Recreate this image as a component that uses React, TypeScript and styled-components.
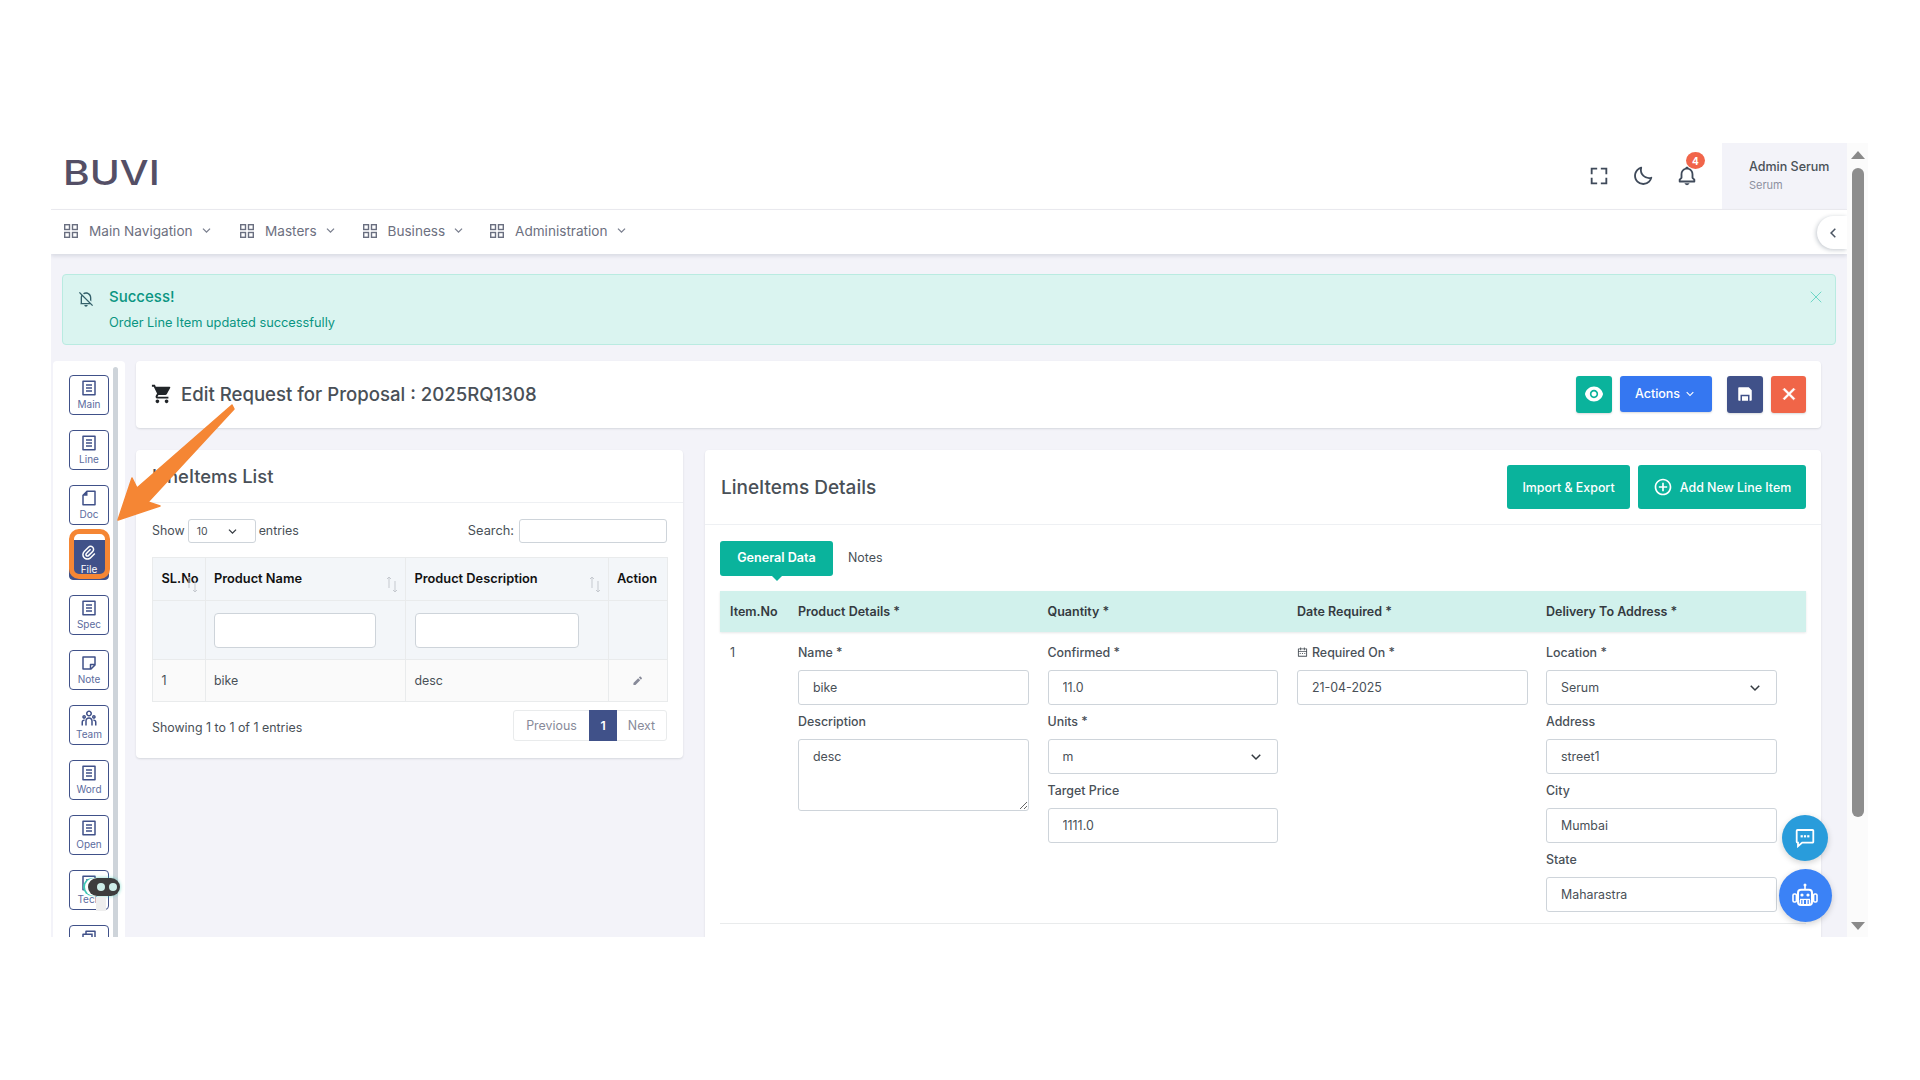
import React from "react";
import styled, { createGlobalStyle } from "styled-components";
import {
  RiArrowDownSLine, RiArrowLeftSLine, RiNotificationOffLine, RiCloseLine, RiEyeFill, RiSaveFill,
  RiFileListLine, RiFile2Line, RiAttachment2, RiStickyNoteLine, RiTeamLine, RiPencilFill,
  RiAddCircleLine, RiCalendar2Line, RiFileCopyLine,
} from "react-icons/ri";
import { MdShoppingCart } from "react-icons/md";
import { BiFullscreen, BiMoon, BiBell } from "react-icons/bi";
import { X } from "lucide-react";

const FONT = `Inter, "Noto Sans", "Liberation Sans", sans-serif`;

const Global = createGlobalStyle`
  html, body { margin: 0; background: #fff; font-family: ${FONT}; }
  body { overflow: hidden; }
  * { box-sizing: border-box; }
`;

const Page = styled.div`
  position: relative;
  width: 1920px;
  height: 1080px;
  padding: 143px 0 0 51px;
  display: flex;
  align-items: flex-start;
`;
const Frame = styled.div`
  position: relative;
  width: 1796px;
  height: 794px;
  overflow: hidden;
  background: #f3f3f9;
  display: flex;
  flex-direction: column;
`;
const ScrollTrack = styled.div`
  width: 21px;
  height: 794px;
  background: #fbfbfb;
  display: flex;
  flex-direction: column;
  align-items: center;
  padding: 8px 0 7px;
`;
const ScrollUp = styled.div`
  width: 0; height: 0;
  border-left: 7px solid transparent; border-right: 7px solid transparent;
  border-bottom: 8px solid #8a8a8a;
`;
const ScrollThumb = styled.div`
  width: 12px;
  height: 649px;
  margin-top: 9px;
  border-radius: 6px;
  background: #8d8d8d;
`;
const ScrollDown = styled.div`
  width: 0; height: 0;
  margin-top: auto;
  border-left: 7px solid transparent; border-right: 7px solid transparent;
  border-top: 8px solid #8a8a8a;
`;

const Header = styled.header`
  height: 67px;
  flex: none;
  background: #fff;
  border-bottom: 1px solid #ececf1;
  display: flex;
  align-items: center;
  padding-left: 12px;
`;
const Logo = styled.div`
  font-size: 34.5px;
  font-weight: 500;
  line-height: 1;
  color: #544f66;
  margin-top: -5px;
  transform: scaleX(1.18);
  transform-origin: left center;
`;
const HeaderIcons = styled.div`
  margin-left: auto;
  display: flex;
  align-items: center;
  gap: 22px;
  margin-right: 24px;
  color: #3f4a5a;
`;
const IconHolder = styled.div`
  position: relative;
  width: 22px;
  height: 22px;
  display: flex;
  align-items: center;
  justify-content: center;
  font-size: 22px;
`;
const Badge = styled.span`
  position: absolute;
  left: 10px;
  top: -13px;
  width: 19px;
  height: 17px;
  border-radius: 50%;
  background: #f1654a;
  color: #fff;
  font-size: 10px;
  font-weight: 700;
  display: flex;
  align-items: center;
  justify-content: center;
`;
const UserPanel = styled.div`
  width: 125px;
  height: 66px;
  background: #f3f3f9;
  padding: 15px 0 0 27px;
`;
const UserName = styled.div`
  font-size: 12.5px;
  font-weight: 500;
  line-height: 18px;
  color: #495057;
  white-space: nowrap;
`;
const UserRole = styled.div`
  font-size: 11px;
  line-height: 18px;
  color: #8d90a0;
`;

const Nav = styled.nav`
  position: relative;
  height: 44px;
  flex: none;
  background: #fff;
  box-shadow: 0 2px 4px rgba(15, 34, 58, 0.12);
  display: flex;
  align-items: center;
  padding: 0 0 3px 12px;
`;
const NavItem = styled.div<{ $w: number }>`
  width: ${(p) => p.$w}px;
  display: flex;
  align-items: center;
  color: #6d7080;
  font-size: 13.6px;
  white-space: nowrap;
  svg:last-child { font-size: 15px; margin-left: 6px; color: #7a7f8e; }
`;
const GridGlyph = styled.svg`
  width: 14px;
  height: 14px;
  margin: 0 11px 0 1px;
  flex: none;
  color: #6a6f80;
`;
const CollapseTab = styled.div`
  position: absolute;
  right: 0;
  top: 6px;
  width: 30px;
  height: 33px;
  border-radius: 17px 0 0 17px;
  background: #fff;
  box-shadow: -1px 1px 4px rgba(15, 34, 58, 0.25);
  display: flex;
  align-items: center;
  padding-left: 7px;
  font-size: 18px;
  color: #4b5563;
`;

const Alert = styled.div`
  flex: none;
  height: 71px;
  margin: 20px 11px 0;
  border: 1px solid #b9ebe1;
  border-radius: 4px;
  background: #daf4f0;
  color: #0a9582;
  display: flex;
  padding: 12px 9px 0 15px;
`;
const AlertIcon = styled.div`
  font-size: 16px;
  margin: 4px 15px 0 0;
  color: #33606a;
  line-height: 1;
`;
const AlertTitle = styled.div`
  font-size: 15px;
  font-weight: 500;
  line-height: 20px;
`;
const AlertText = styled.div`
  margin-top: 6px;
  font-size: 12.8px;
  line-height: 20px;
`;
const AlertClose = styled.div`
  margin-left: auto;
  color: #6fd7c7;
  line-height: 1;
`;

const Main = styled.div`
  flex: 1;
  min-height: 0;
  display: flex;
  gap: 11px;
  margin: 16px 26px 0 2px;
`;
const Sidebar = styled.aside`
  position: relative;
  width: 72px;
  flex: none;
  background: #fff;
  border-radius: 4px 4px 0 0;
  display: flex;
  padding: 14px 0 0 16px;
  overflow: hidden;
`;
const SideList = styled.div`
  width: 40px;
  display: flex;
  flex-direction: column;
  gap: 15px;
`;
const SideButton = styled.div<{ $active?: boolean }>`
  position: relative;
  width: 40px;
  height: 40px;
  flex: none;
  border: 1px solid #405189;
  border-radius: 4px;
  background: ${(p) => (p.$active ? "#405189" : "#fff")};
  color: ${(p) => (p.$active ? "#fff" : "#405189")};
  display: flex;
  flex-direction: column;
  align-items: center;
  padding-top: 3px;
  svg { font-size: 18px; flex: none; }
  span { font-size: 10px; line-height: 13px; margin-top: 1px; color: ${(p) => (p.$active ? "#fff" : "#5c6c9e")}; }
`;
const Highlight = styled.div`
  position: absolute;
  inset: -12px -2px 0 -1px;
  border: 5px solid #f58634;
  border-radius: 10px;
`;
const SideScroll = styled.div`
  position: absolute;
  left: 60px;
  top: 6px;
  bottom: 0;
  width: 5px;
  border-radius: 3px 3px 0 0;
  background: #ced4da;
`;
const PillHost = styled.div`
  position: absolute;
  left: 35px;
  top: 517px;
  width: 32px;
  height: 18px;
  border-radius: 9px;
  background: #3d3d3d;
  box-shadow: -3px 0 0 #fff, -5px 0 0 #3fc7b4, 0 0 3px 1px rgba(63, 199, 180, 0.4);
  display: flex;
  align-items: center;
  justify-content: flex-end;
  gap: 4px;
  padding-right: 3px;
  &::after {
    content: "";
    position: absolute;
    left: 8px;
    top: 19px;
    width: 10px;
    height: 14px;
    background: #eeeeee;
  }
`;
const PillDot = styled.i`
  width: 8px;
  height: 8px;
  border-radius: 50%;
  background: #cdeee8;
`;

const Content = styled.div`
  flex: 1;
  min-width: 0;
  display: flex;
  flex-direction: column;
  gap: 22px;
`;
const Card = styled.section`
  background: #fff;
  border-radius: 4px;
  box-shadow: 0 1px 2px rgba(56, 65, 74, 0.15);
`;
const TitleCard = styled(Card)`
  height: 67px;
  flex: none;
  display: flex;
  align-items: center;
  padding: 0 15px 0 15px;
`;
const CartIcon = styled.div`
  font-size: 22px;
  line-height: 1;
  color: #212529;
  margin: -2px 8px 0 0;
  display: flex;
`;
const PageTitle = styled.h1`
  margin: 0 0 2px;
  font-size: 18.6px;
  font-weight: 500;
  color: #495057;
  white-space: nowrap;
`;
const Actions = styled.div`
  margin-left: auto;
  display: flex;
  align-items: flex-start;
`;
const ActionButton = styled.div<{ $bg: string; $w: number; $h?: number; $ml?: number }>`
  width: ${(p) => p.$w}px;
  height: ${(p) => p.$h ?? 37}px;
  margin-left: ${(p) => p.$ml ?? 0}px;
  background: ${(p) => p.$bg};
  border-radius: 3px;
  color: #fff;
  display: flex;
  align-items: center;
  justify-content: center;
  font-size: 18px;
  padding-bottom: 1px;
  box-shadow: 0 1px 2px rgba(56, 65, 74, 0.2);
`;
const ActionLabel = styled.span`
  font-size: 12.5px;
  font-weight: 500;
  margin-right: 3px;
`;
const Panels = styled.div`
  flex: 1;
  min-height: 0;
  display: flex;
  gap: 22px;
  align-items: flex-start;
`;
const ListCard = styled(Card)`
  width: 547px;
  flex: none;
  padding-bottom: 17px;
`;
const CardHead = styled.div<{ $h: number }>`
  height: ${(p) => p.$h}px;
  border-bottom: 1px solid #eef0f3;
  display: flex;
  align-items: center;
  padding: 0 15px 0 16px;
`;
const CardTitle = styled.h2<{ $size: number }>`
  margin: 0;
  font-size: ${(p) => p.$size}px;
  font-weight: 500;
  color: #495057;
  white-space: nowrap;
`;
const ToolRow = styled.div`
  height: 24px;
  margin: 16px 16px 14px;
  display: flex;
  align-items: center;
  font-size: 12.4px;
  color: #495057;
  padding-bottom: 1px;
`;
const MiniSelect = styled.div`
  width: 68px;
  height: 24px;
  margin: 1px 3px 0;
  border: 1px solid #ced4da;
  border-radius: 3px;
  display: flex;
  align-items: center;
  justify-content: space-between;
  padding: 0 15px 0 8px;
  font-size: 10.5px;
  svg { font-size: 15px; color: #343a40; }
`;
const SearchWrap = styled.div`
  margin-left: auto;
  display: flex;
  align-items: center;
  gap: 5px;
  font-size: 12.8px;
`;
const SearchBox = styled.input`
  width: 148px;
  height: 24px;
  margin-top: 1px;
  border: 1px solid #ced4da;
  border-radius: 3px;
  background: #fff;
  outline: none;
`;
const Table = styled.table`
  width: 515px;
  margin: 0 16px;
  border-collapse: collapse;
  table-layout: fixed;
  font-size: 12.4px;
  color: #495057;
  th, td { border: 1px solid #e9ebec; padding: 0 0 0 8.5px; }
`;
const HeadRow = styled.tr`
  height: 43px;
  background: #f3f6f9;
  th { position: relative; text-align: left; font-weight: 600; color: #111; white-space: nowrap; font-size: 12.8px; padding-bottom: 1px; }
`;
const FilterRow = styled.tr`
  height: 59px;
  background: #f3f6f9;
`;
const BodyRow = styled.tr`
  height: 42px;
  background: #fafafa;
  td { padding-bottom: 1px; }
`;
const SortMark = styled.svg`
  position: absolute;
  right: 7px;
  top: 18px;
`;
const FilterBox = styled.input<{ $w: number }>`
  display: block;
  width: ${(p) => p.$w}px;
  height: 35px;
  border: 1px solid #ced4da;
  border-radius: 4px;
  background: #fff;
  outline: none;
`;
const PencilCell = styled.td`
  text-align: center;
  color: #878a99;
  font-size: 11.5px;
  && { padding: 3px 0 0; }
`;
const Footer = styled.div`
  margin: 8px 16px 0;
  height: 31px;
  display: flex;
  align-items: center;
  justify-content: space-between;
  font-size: 12.4px;
  color: #495057;
`;
const FooterInfo = styled.span`
  margin-top: 4px;
`;
const Pager = styled.div`
  display: flex;
  height: 31px;
  border: 1px solid #e9ebec;
  border-radius: 3px;
  color: #878a99;
`;
const PagerCell = styled.div<{ $w: number; $active?: boolean }>`
  width: ${(p) => p.$w}px;
  display: flex;
  align-items: center;
  justify-content: center;
  margin: ${(p) => (p.$active ? "-1px 0" : "0")};
  background: ${(p) => (p.$active ? "#405189" : "transparent")};
  color: ${(p) => (p.$active ? "#fff" : "#878a99")};
  font-weight: ${(p) => (p.$active ? 600 : 400)};
`;

const DetailCard = styled(Card)`
  flex: 1;
  min-width: 0;
  min-height: 600px;
`;
const HeadButtons = styled.div`
  margin-left: auto;
  display: flex;
  gap: 8px;
`;
const TealButton = styled.div<{ $w: number }>`
  width: ${(p) => p.$w}px;
  height: 44px;
  border-radius: 3px;
  background: #0ab39c;
  color: #fff;
  display: flex;
  align-items: center;
  justify-content: center;
  gap: 7px;
  font-size: 12.4px;
  font-weight: 500;
  white-space: nowrap;
  svg { font-size: 20px; }
`;
const DetailBody = styled.div`
  padding: 16px 15px 0;
`;
const Tabs = styled.div`
  display: flex;
  align-items: center;
  height: 35px;
  margin-bottom: 15px;
`;
const ActiveTab = styled.div`
  position: relative;
  width: 113px;
  height: 35px;
  border-radius: 3px;
  background: #0ab39c;
  color: #fff;
  font-size: 12.6px;
  font-weight: 600;
  padding-bottom: 2px;
  display: flex;
  align-items: center;
  justify-content: center;
  &::after {
    content: "";
    position: absolute;
    left: 50%;
    bottom: -5px;
    margin-left: -6px;
    border-left: 6px solid transparent;
    border-right: 6px solid transparent;
    border-top: 6px solid #0ab39c;
  }
`;
const Tab = styled.div`
  margin: 0 0 2px 15px;
  font-size: 12.4px;
  color: #495057;
`;
const GridRow = styled.div`
  display: grid;
  grid-template-columns: 78px 249.5px 249.5px 249px 260px;
`;
const HeadGrid = styled(GridRow)`
  height: 41px;
  align-items: center;
  background: #d1f1ec;
  box-shadow: 0 1px 2px rgba(56, 65, 74, 0.12);
  font-size: 12.5px;
  font-weight: 600;
  color: #343a40;
`;
const ItemCell = styled.div`
  padding-left: 10px;
  white-space: nowrap;
`;
const DataGrid = styled(GridRow)`
  padding: 4px 0 11px;
  border-bottom: 1px solid #e9ebec;
  font-size: 12.4px;
  color: #495057;
`;
const ItemNumber = styled.div`
  padding: 0 0 1px 10px;
  height: 34px;
  display: flex;
  align-items: center;
`;
const FieldLabel = styled.label`
  height: 34px;
  padding-bottom: 1px;
  display: flex;
  align-items: center;
  gap: 4px;
  font-weight: 500;
  svg { font-size: 11px; }
`;
const Control = styled.input`
  display: block;
  width: 230.5px;
  height: 35px;
  border: 1px solid #ced4da;
  border-radius: 3px;
  padding: 0 14px;
  font: inherit;
  font-size: 12.4px;
  color: #495057;
  background: #fff;
  outline: none;
`;
const Area = styled.textarea`
  display: block;
  width: 230.5px;
  height: 72px;
  border: 1px solid #ced4da;
  border-radius: 3px;
  padding: 9px 14px;
  font: inherit;
  color: #495057;
  resize: vertical;
  outline: none;
`;
const SelectControl = styled.div`
  width: 230.5px;
  height: 35px;
  border: 1px solid #ced4da;
  border-radius: 3px;
  display: flex;
  align-items: center;
  justify-content: space-between;
  padding: 0 12px 0 14px;
  svg { font-size: 18px; color: #343a40; }
`;
const Float = styled.div<{ $bg: string; $size: number; $top: number }>`
  position: absolute;
  left: ${(p) => 1754 - p.$size / 2}px;
  top: ${(p) => p.$top - p.$size / 2}px;
  width: ${(p) => p.$size}px;
  height: ${(p) => p.$size}px;
  border-radius: 50%;
  background: ${(p) => p.$bg};
  color: #fff;
  display: flex;
  align-items: center;
  justify-content: center;
  box-shadow: 0 2px 6px rgba(0, 0, 0, 0.18);
`;
const ArrowArt = styled.svg`
  position: absolute;
  left: 0;
  top: 0;
  pointer-events: none;
`;

const Sort = () => (
  <SortMark width="12" height="17" viewBox="0 0 12 17" fill="none" stroke="#c5c9cf" strokeWidth="1">
    <path d="M3 12V1M1 3l2-2 2 2M9 5v11M7 14l2 2 2-2" />
  </SortMark>
);

const NavGrid = () => (
  <GridGlyph viewBox="0 0 14 14" fill="none" stroke="currentColor" strokeWidth="1.4">
    <rect x="0.7" y="0.7" width="4.8" height="4.8" />
    <rect x="8.5" y="0.7" width="4.8" height="4.8" />
    <rect x="0.7" y="8.5" width="4.8" height="4.8" />
    <rect x="8.5" y="8.5" width="4.8" height="4.8" />
  </GridGlyph>
);

const ChatGlyph = () => (
  <svg width="20" height="20" viewBox="0 0 20 20" fill="none">
    <path d="M2.5 2h15a.8.8 0 0 1 .8.8v11a.8.8 0 0 1-.8.8H7.2L3 18.2v-3.6h-.5a.8.8 0 0 1-.8-.8v-11a.8.8 0 0 1 .8-.8z" stroke="#fff" strokeWidth="1.8" />
    <rect x="5.6" y="7.2" width="2.2" height="2.2" fill="#fff" />
    <rect x="8.9" y="7.2" width="2.2" height="2.2" fill="#fff" />
    <rect x="12.2" y="7.2" width="2.2" height="2.2" fill="#fff" />
  </svg>
);

const RobotGlyph = () => (
  <svg width="26" height="24" viewBox="0 0 26 24" fill="none">
    <circle cx="13" cy="2" r="1.5" fill="#fff" />
    <rect x="12.2" y="2" width="1.6" height="5" fill="#fff" />
    <rect x="6" y="6.8" width="14" height="15.2" rx="3" stroke="#fff" strokeWidth="2" />
    <rect x="1" y="11" width="3.4" height="8" rx="1.2" stroke="#fff" strokeWidth="1.6" />
    <rect x="21.6" y="11" width="3.4" height="8" rx="1.2" stroke="#fff" strokeWidth="1.6" />
    <circle cx="10" cy="12" r="1.6" fill="#fff" />
    <circle cx="16" cy="12" r="1.6" fill="#fff" />
    <path d="M8.5 17v4.5M11.2 17v4.5M14.8 17v4.5M17.5 17v4.5" stroke="#fff" strokeWidth="1.5" />
    <path d="M8 16.4h10" stroke="#fff" strokeWidth="1.2" />
  </svg>
);

const side = [
  ["Main", RiFileListLine], ["Line", RiFileListLine], ["Doc", RiFile2Line], ["File", RiAttachment2],
  ["Spec", RiFileListLine], ["Note", RiStickyNoteLine], ["Team", RiTeamLine], ["Word", RiFileListLine],
  ["Open", RiFileListLine], ["Tech", RiFileListLine], ["", RiFileCopyLine],
] as const;

const nav: [string, number][] = [["Main Navigation", 176], ["Masters", 122.5], ["Business", 127.5], ["Administration", 160]];

export default function App() {
  return (
    <Page>
      <Global />
      <Frame>
        <Header>
          <Logo>BUVI</Logo>
          <HeaderIcons>
            <IconHolder><BiFullscreen /></IconHolder>
            <IconHolder><BiMoon /></IconHolder>
            <IconHolder><BiBell /><Badge>4</Badge></IconHolder>
          </HeaderIcons>
          <UserPanel>
            <UserName>Admin Serum</UserName>
            <UserRole>Serum</UserRole>
          </UserPanel>
        </Header>
        <Nav>
          {nav.map(([t, w]) => (
            <NavItem key={t} $w={w}><NavGrid />{t}<RiArrowDownSLine /></NavItem>
          ))}
          <CollapseTab><RiArrowLeftSLine /></CollapseTab>
        </Nav>
        <Alert>
          <AlertIcon><RiNotificationOffLine /></AlertIcon>
          <div>
            <AlertTitle>Success!</AlertTitle>
            <AlertText>Order Line Item updated successfully</AlertText>
          </div>
          <AlertClose><X size={20} strokeWidth={1.2} /></AlertClose>
        </Alert>
        <Main>
          <Sidebar>
            <SideList>
              {side.map(([label, Icon], i) => (
                <SideButton key={i} $active={label === "File"}>
                  <Icon />
                  {label && <span>{label}</span>}
                  {label === "File" && <Highlight />}
                </SideButton>
              ))}
            </SideList>
            <SideScroll />
            <PillHost><PillDot /><PillDot /></PillHost>
          </Sidebar>
          <Content>
            <TitleCard>
              <CartIcon><MdShoppingCart /></CartIcon>
              <PageTitle>Edit Request for Proposal : 2025RQ1308</PageTitle>
              <Actions>
                <ActionButton $bg="#0ab39c" $w={36}><RiEyeFill size={20} /></ActionButton>
                <ActionButton $bg="#3577f1" $w={92} $h={36} $ml={8}><ActionLabel>Actions</ActionLabel><RiArrowDownSLine size={14} /></ActionButton>
                <ActionButton $bg="#405189" $w={36} $ml={15}><RiSaveFill /></ActionButton>
                <ActionButton $bg="#f06548" $w={35} $ml={8}><RiCloseLine size={22} strokeWidth={0.8} stroke="currentColor" /></ActionButton>
              </Actions>
            </TitleCard>
            <Panels>
              <ListCard>
                <CardHead $h={53}><CardTitle $size={18.4}>LineItems List</CardTitle></CardHead>
                <ToolRow>
                  Show
                  <MiniSelect>10<RiArrowDownSLine /></MiniSelect>
                  entries
                  <SearchWrap>Search:<SearchBox /></SearchWrap>
                </ToolRow>
                <Table>
                  <colgroup>
                    <col style={{ width: 52.5 }} /><col style={{ width: 200.5 }} /><col style={{ width: 202.5 }} /><col style={{ width: 59.5 }} />
                  </colgroup>
                  <thead>
                    <HeadRow>
                      <th>SL.No<Sort /></th>
                      <th>Product Name<Sort /></th>
                      <th>Product Description<Sort /></th>
                      <th>Action</th>
                    </HeadRow>
                    <FilterRow>
                      <td />
                      <td><FilterBox $w={162} /></td>
                      <td><FilterBox $w={164} /></td>
                      <td />
                    </FilterRow>
                  </thead>
                  <tbody>
                    <BodyRow>
                      <td>1</td><td>bike</td><td>desc</td>
                      <PencilCell><RiPencilFill /></PencilCell>
                    </BodyRow>
                  </tbody>
                </Table>
                <Footer>
                  <FooterInfo>Showing 1 to 1 of 1 entries</FooterInfo>
                  <Pager>
                    <PagerCell $w={75}>Previous</PagerCell>
                    <PagerCell $w={28} $active>1</PagerCell>
                    <PagerCell $w={49}>Next</PagerCell>
                  </Pager>
                </Footer>
              </ListCard>
              <DetailCard>
                <CardHead $h={75}>
                  <CardTitle $size={19}>LineItems Details</CardTitle>
                  <HeadButtons>
                    <TealButton $w={123}>Import &amp; Export</TealButton>
                    <TealButton $w={168}><RiAddCircleLine />Add New Line Item</TealButton>
                  </HeadButtons>
                </CardHead>
                <DetailBody>
                  <Tabs>
                    <ActiveTab>General Data</ActiveTab>
                    <Tab>Notes</Tab>
                  </Tabs>
                  <HeadGrid>
                    <ItemCell>Item.No</ItemCell>
                    <div>Product Details *</div>
                    <div>Quantity *</div>
                    <div>Date Required *</div>
                    <div>Delivery To Address *</div>
                  </HeadGrid>
                  <DataGrid>
                    <ItemNumber>1</ItemNumber>
                    <div>
                      <FieldLabel>Name *</FieldLabel>
                      <Control defaultValue="bike" />
                      <FieldLabel>Description</FieldLabel>
                      <Area defaultValue="desc" />
                    </div>
                    <div>
                      <FieldLabel>Confirmed *</FieldLabel>
                      <Control defaultValue="11.0" />
                      <FieldLabel>Units *</FieldLabel>
                      <SelectControl>m<RiArrowDownSLine /></SelectControl>
                      <FieldLabel>Target Price</FieldLabel>
                      <Control defaultValue="1111.0" />
                    </div>
                    <div>
                      <FieldLabel><RiCalendar2Line />Required On *</FieldLabel>
                      <Control defaultValue="21-04-2025" />
                    </div>
                    <div>
                      <FieldLabel>Location *</FieldLabel>
                      <SelectControl>Serum<RiArrowDownSLine /></SelectControl>
                      <FieldLabel>Address</FieldLabel>
                      <Control defaultValue="street1" />
                      <FieldLabel>City</FieldLabel>
                      <Control defaultValue="Mumbai" />
                      <FieldLabel>State</FieldLabel>
                      <Control defaultValue="Maharastra" />
                    </div>
                  </DataGrid>
                </DetailBody>
              </DetailCard>
            </Panels>
          </Content>
        </Main>
        <Float $bg="#299cdb" $size={46} $top={695}><ChatGlyph /></Float>
        <Float $bg="#3b82f6" $size={53} $top={752}><RobotGlyph /></Float>
      </Frame>
      <ScrollTrack>
        <ScrollUp />
        <ScrollThumb />
        <ScrollDown />
      </ScrollTrack>
      <ArrowArt width="300" height="600">
        <polygon
          points="118,520 132,478 137,488 232,405 234,409 148,502 160,506"
          fill="#f58634"
          stroke="#f58634"
          strokeWidth="1.5"
          strokeLinejoin="round"
        />
      </ArrowArt>
    </Page>
  );
}
